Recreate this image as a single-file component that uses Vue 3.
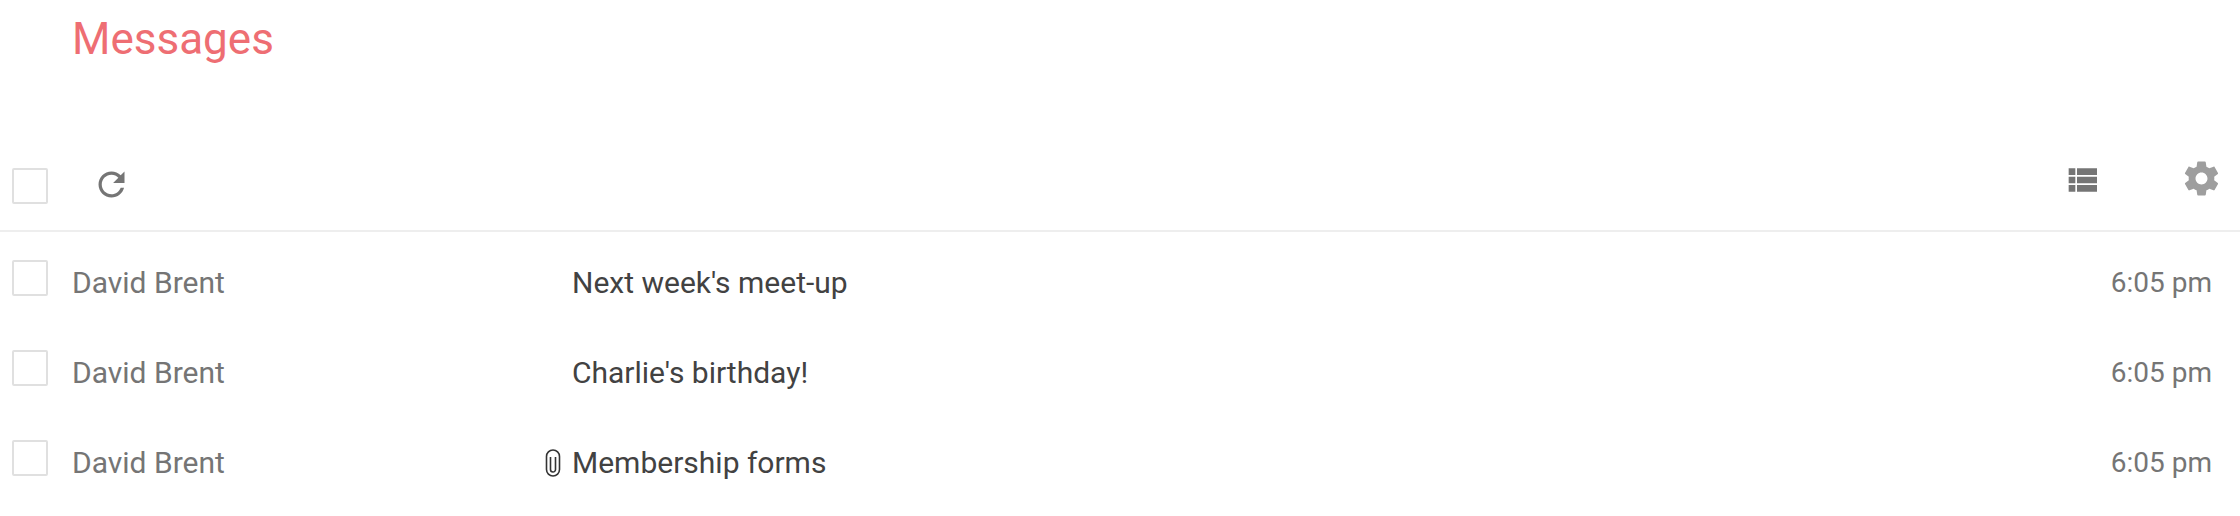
<template>
  <div class="page">
    <h1 class="title">Messages</h1>

    <div class="toolbar">
      <span class="check"></span>
      <button class="refresh" type="button" aria-label="Refresh">
        <svg width="39" height="39" viewBox="0 0 24 24">
          <path d="M17.65 6.35C16.2 4.9 14.21 4 12 4c-4.42 0-7.99 3.58-7.99 8s3.57 8 7.99 8c3.73 0 6.84-2.55 7.73-6h-2.08c-.82 2.33-3.04 4-5.65 4-3.31 0-6-2.69-6-6s2.69-6 6-6c1.66 0 3.14.69 4.22 1.78L13 11h7V4l-2.35 2.35z" />
        </svg>
      </button>
      <div class="tools">
        <svg class="list-icon" width="40" height="40" viewBox="0 0 24 24">
          <path d="M4 14h4v-4H4v4zm0 5h4v-4H4v4zM4 9h4V5H4v4zm5 5h12v-4H9v4zm0 5h12v-4H9v4zM9 5v4h12V5H9z" />
        </svg>
        <svg class="gear-icon" width="41" height="41" viewBox="0 0 24 24">
          <path d="M19.43 12.98c.04-.32.07-.64.07-.98s-.03-.66-.07-.98l2.11-1.65c.19-.15.24-.42.12-.64l-2-3.46c-.12-.22-.39-.3-.61-.22l-2.49 1c-.52-.4-1.08-.73-1.69-.98l-.38-2.65C14.46 2.18 14.25 2 14 2h-4c-.25 0-.46.18-.49.42l-.38 2.65c-.61.25-1.17.59-1.69.98l-2.49-1c-.23-.09-.49 0-.61.22l-2 3.46c-.13.22-.07.49.12.64l2.11 1.65c-.04.32-.07.65-.07.98s.03.66.07.98l-2.11 1.65c-.19.15-.24.42-.12.64l2 3.46c.12.22.39.3.61.22l2.49-1c.52.4 1.08.73 1.69.98l.38 2.65c.03.24.24.42.49.42h4c.25 0 .46-.18.49-.42l.38-2.65c.61-.25 1.17-.59 1.69-.98l2.49 1c.23.09.49 0 .61-.22l2-3.46c.12-.22.07-.49-.12-.64l-2.11-1.65zM12 15.5c-1.93 0-3.5-1.57-3.5-3.5s1.57-3.5 3.5-3.5 3.5 1.57 3.5 3.5-1.57 3.5-3.5 3.5z" />
        </svg>
      </div>
    </div>

    <ul class="messages">
      <li v-for="msg in messages" :key="msg.subject" class="message">
        <span class="check"></span>
        <span class="sender">{{ msg.sender }}</span>
        <span class="clip">
          <svg v-if="msg.attachment" width="16" height="28" viewBox="0 0 16 28">
            <path d="M10.5 8v12.5a2.5 2.5 0 0 1-5 0V8M14.5 8v12.5a6.5 6.5 0 0 1-13 0V7.5a6.5 6.5 0 0 1 13 0V8" />
          </svg>
        </span>
        <span class="subject">{{ msg.subject }}</span>
        <span class="time">{{ msg.time }}</span>
      </li>
    </ul>
  </div>
</template>

<script setup>
const messages = [
  { sender: 'David Brent', subject: "Next week's meet-up", time: '6:05 pm', attachment: false },
  { sender: 'David Brent', subject: "Charlie's birthday!", time: '6:05 pm', attachment: false },
  { sender: 'David Brent', subject: 'Membership forms', time: '6:05 pm', attachment: true }
]
</script>

<style>
html,
body {
  margin: 0;
  background: #fff;
  overflow: hidden;
}
</style>

<style scoped>
.page {
  height: 516px;
  overflow: hidden;
  font-family: Roboto, "Liberation Sans", sans-serif;
}

.title {
  margin: 0;
  height: 168px;
  padding: 14px 0 0 72px;
  box-sizing: border-box;
  font-size: 44px;
  line-height: 50px;
  font-weight: 400;
  color: #ee6e73;
}

.toolbar {
  display: flex;
  align-items: flex-start;
  height: 62px;
  padding-left: 12px;
  border-bottom: 2px solid #eee;
}

.check {
  flex: none;
  width: 36px;
  height: 36px;
  box-sizing: border-box;
  border: 2px solid #e0e0e0;
  border-radius: 2px;
}

.refresh {
  display: flex;
  margin: -3px 0 0 44px;
  padding: 0;
  border: 0;
  background: none;
}

.refresh svg {
  fill: #757575;
}

.tools {
  display: flex;
  align-items: flex-start;
  margin-left: auto;
  padding-right: 18px;
}

.list-icon {
  margin: -8px 0 0;
  fill: #757575;
}

.gear-icon {
  margin: -10px 0 0 79px;
  fill: #9e9e9e;
}

.messages {
  list-style: none;
  margin: 0;
  padding: 0;
}

.message {
  display: flex;
  align-items: flex-start;
  height: 90px;
  padding: 30px 28px 0 12px;
  box-sizing: border-box;
  font-size: 30px;
  line-height: 42px;
}

.message .check {
  margin-top: -2px;
}

.sender {
  width: 473px;
  margin-left: 24px;
  color: #757575;
}

.clip {
  display: flex;
  flex: none;
  width: 27px;
  height: 42px;
  align-items: center;
}

.clip svg {
  fill: none;
  stroke: #333;
  stroke-width: 1.6;
}

.subject {
  color: #424242;
}

.time {
  margin-left: auto;
  font-size: 28px;
  color: #757575;
}
</style>
